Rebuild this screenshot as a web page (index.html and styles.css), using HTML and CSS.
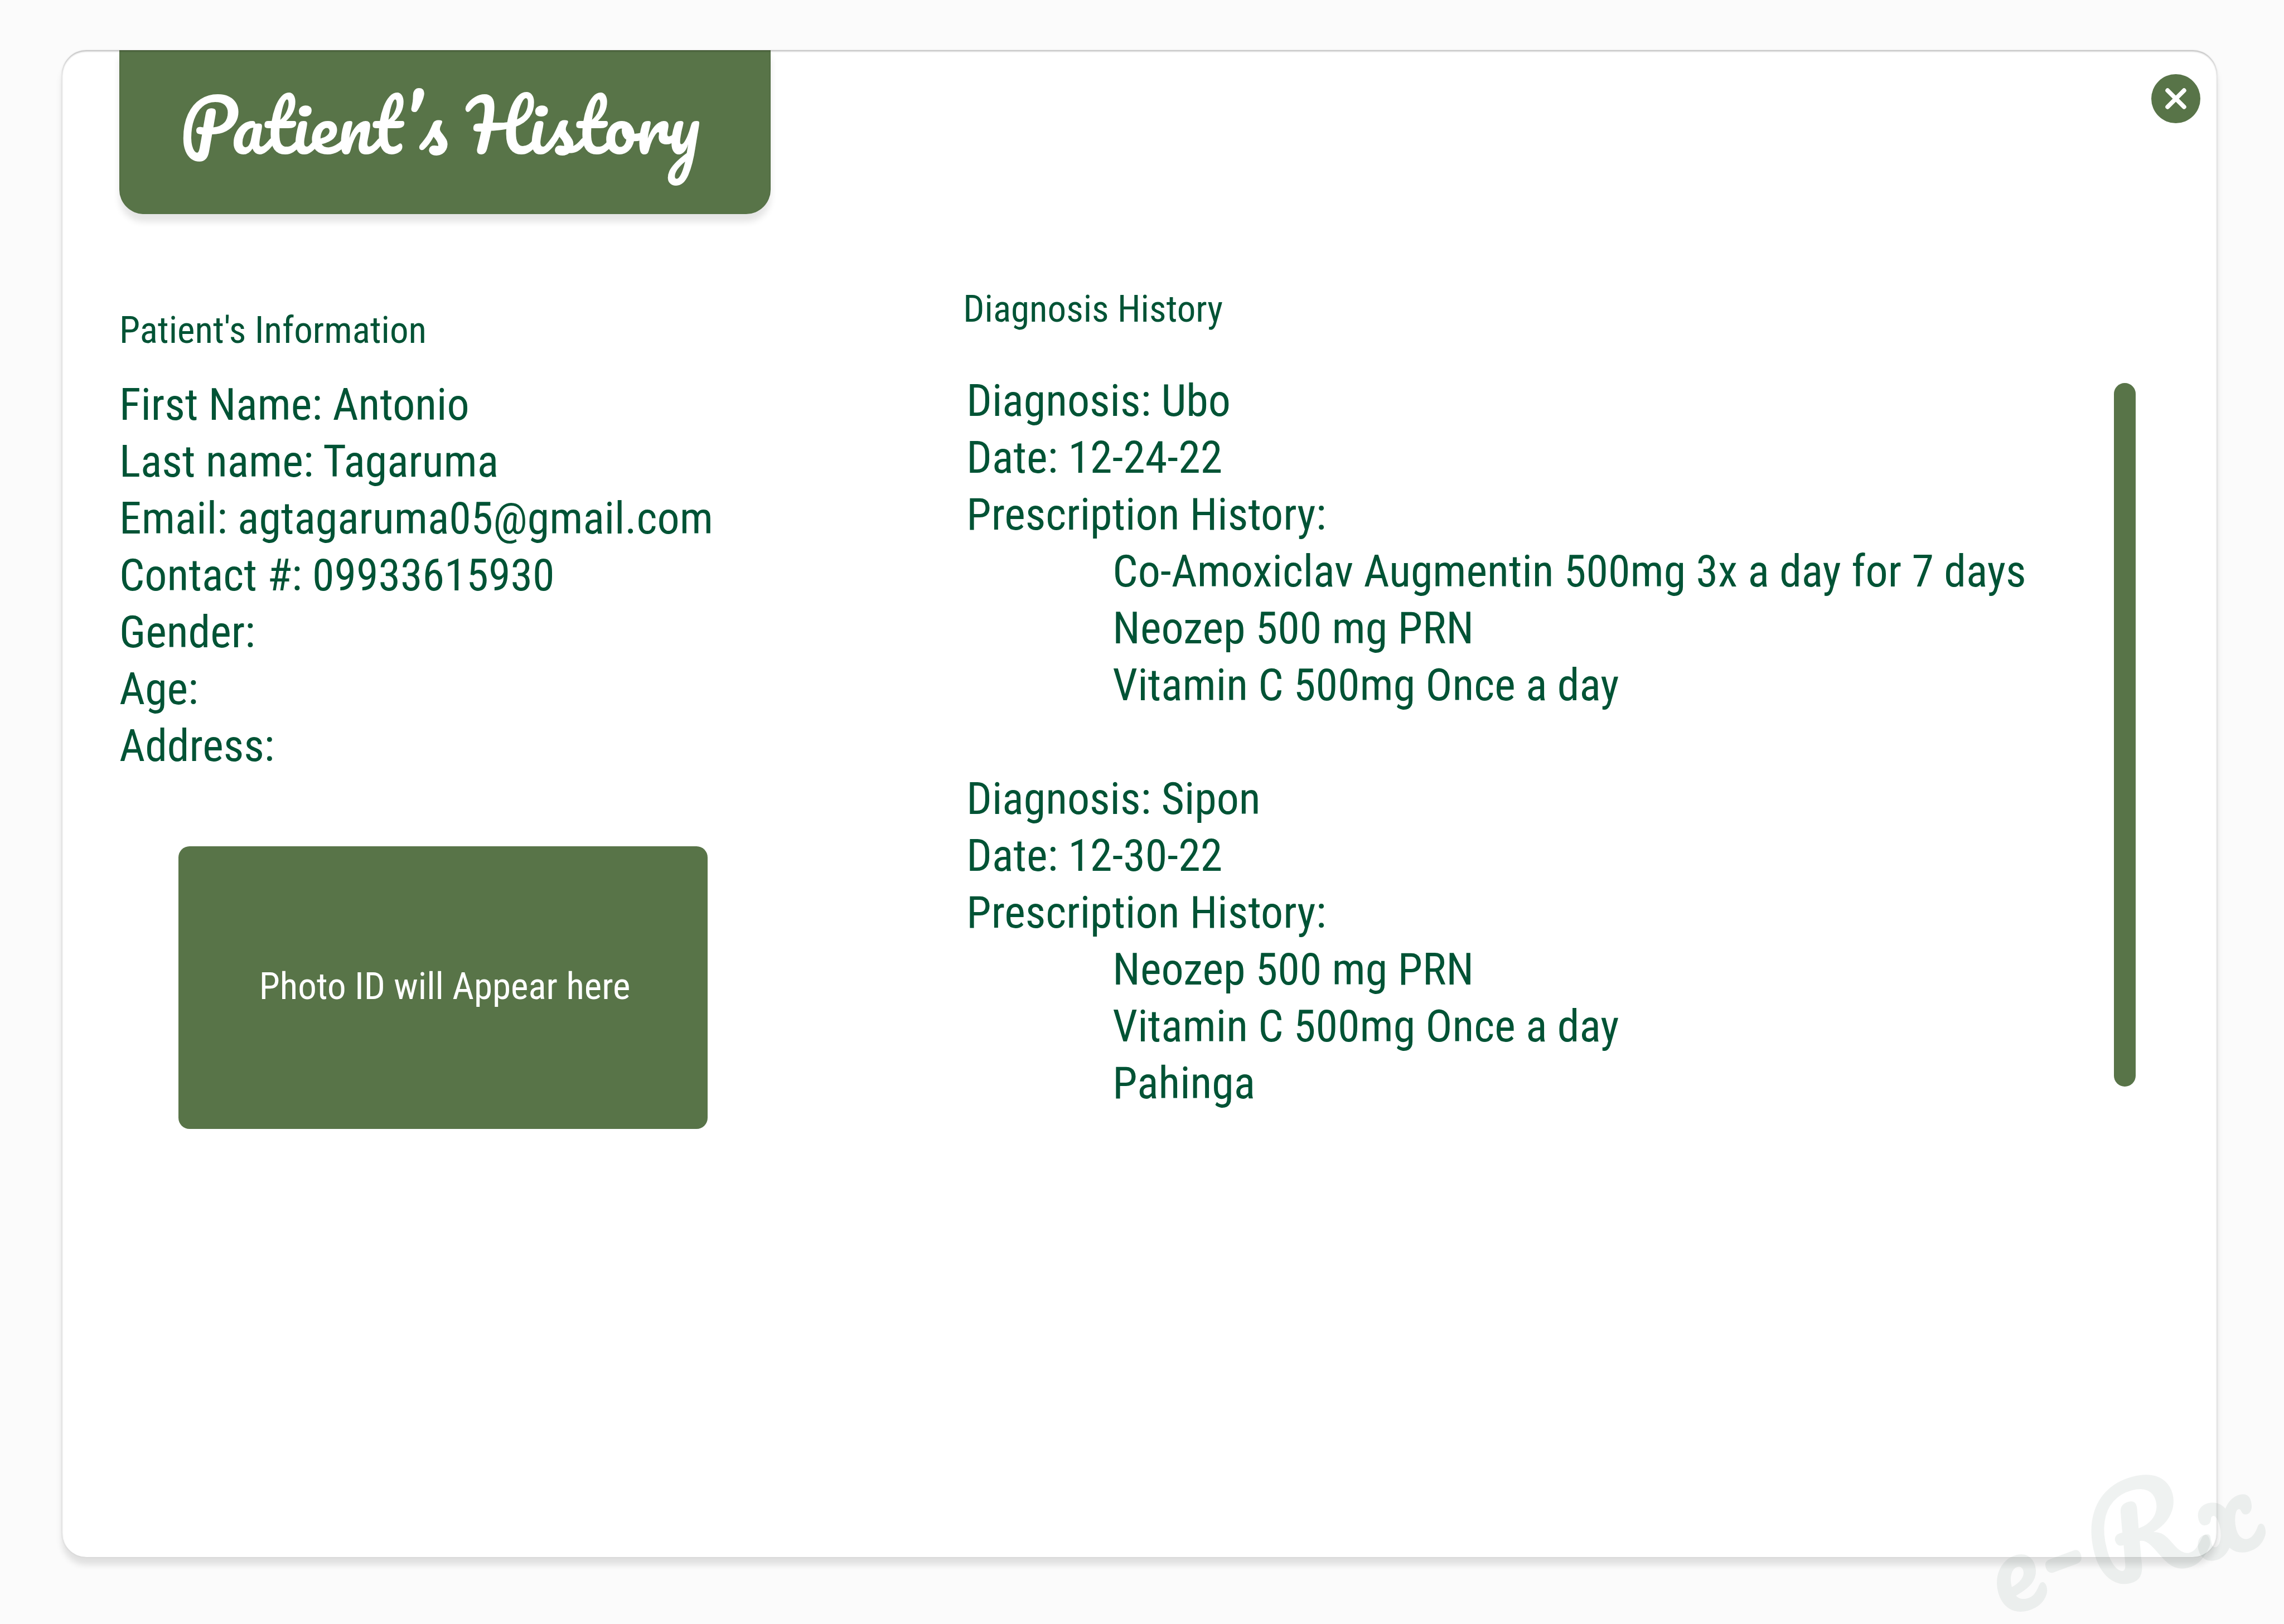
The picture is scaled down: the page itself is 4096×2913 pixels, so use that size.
FILE: index.html
```html
<!DOCTYPE html>
<html lang="en">
<head>
<meta charset="utf-8">
<meta name="viewport" content="width=device-width, initial-scale=1">
<title>Patient's History</title>
<link rel="stylesheet" href="styles.css">
</head>
<body class="page">
<main class="card">
  <header class="card-header">
    <h1 class="tab">Patient’s History</h1>
    <button class="close" type="button" aria-label="Close">
      <svg class="close-icon" viewBox="0 0 128 128" aria-hidden="true">
        <path d="M42.500 42.500L85.500 85.500M85.500 42.500L42.500 85.500" fill="none" stroke="#fff" stroke-width="11.500" stroke-linecap="round"/>
      </svg>
    </button>
  </header>
  <div class="columns">
    <section class="patient">
      <h2 class="heading">Patient's Information</h2>
      <ul class="lines">
        <li>First Name: Antonio</li>
        <li>Last name: Tagaruma</li>
        <li>Email: agtagaruma05@gmail.com</li>
        <li>Contact #: 09933615930</li>
        <li>Gender:</li>
        <li>Age:</li>
        <li>Address:</li>
      </ul>
      <div class="photo">Photo ID will Appear here</div>
    </section>
    <section class="history">
      <h2 class="heading">Diagnosis History</h2>
      <div class="records">
        <ul class="lines">
          <li>Diagnosis: Ubo</li>
          <li>Date: 12-24-22</li>
          <li>Prescription History:
            <ul class="lines prescriptions">
              <li>Co-Amoxiclav Augmentin 500mg 3x a day for 7 days</li>
              <li>Neozep 500 mg PRN</li>
              <li>Vitamin C 500mg Once a day</li>
            </ul>
          </li>
        </ul>
        <ul class="lines">
          <li>Diagnosis: Sipon</li>
          <li>Date: 12-30-22</li>
          <li>Prescription History:
            <ul class="lines prescriptions">
              <li>Neozep 500 mg PRN</li>
              <li>Vitamin C 500mg Once a day</li>
              <li>Pahinga</li>
            </ul>
          </li>
        </ul>
      </div>
    </section>
    <div class="scroll-thumb"></div>
  </div>
</main>
<div class="watermark">e-Rx</div>
</body>
</html>
```
FILE: styles.css
```css
* { box-sizing: border-box; }

.page {
  position: relative;
  display: flex;
  min-height: 100vh;
  margin: 0;
  padding: 90px 120px 120px 111px;
  background: #fbfbfb;
  color: #005335;
  font-family: "Roboto Condensed", Roboto, sans-serif;
  font-size: 80px;
  line-height: 102px;
}

.card {
  flex: 1;
  border-radius: 44px;
  background: #fff;
  box-shadow: 0 14px 12px rgba(0, 0, 0, .11), inset 0 2px 3px rgba(0, 0, 0, .28), 0 0 3px rgba(0, 0, 0, .12);
}

.card-header {
  display: flex;
  justify-content: space-between;
  align-items: flex-start;
  padding: 0 30px 0 103px;
}

.tab {
  margin: 0;
  padding: 21px 127px 49px 109px;
  border-radius: 0 0 44px 44px;
  background: #587448;
  box-shadow: 0 14px 12px rgba(0, 0, 0, .1), inset 0 2px 3px rgba(0, 0, 0, .25);
  color: #fff;
  font: 400 127px/224px Pacifico, cursive;
}

.close {
  width: 88px;
  height: 88px;
  margin-top: 43px;
  padding: 0;
  border: 0;
  border-radius: 50%;
  background: #587448;
}

.close-icon {
  display: block;
  width: 100%;
}

.columns {
  display: grid;
  grid-template-columns: 11fr 15fr 39px;
  padding: 129px 146px 0 103px;
}

.patient { padding-top: 38px; }

.heading {
  margin: 0;
  font-size: 67px;
  font-weight: 400;
  line-height: 82px;
}

.lines {
  margin: 0;
  padding: 0;
  list-style: none;
}

.patient .lines { margin-top: 42px; }

.photo {
  display: flex;
  justify-content: center;
  align-items: center;
  width: 949px;
  height: 507px;
  margin: 129px 0 0 106px;
  padding: 0 0 6px 6px;
  border-radius: 20px;
  background: #587448;
  color: #fff;
  font-size: 67px;
}

.records {
  display: grid;
  gap: 102px;
  margin-top: 73px;
  padding-left: 6px;
}

.prescriptions { padding-left: 262px; }

.scroll-thumb {
  height: 1262px;
  margin-top: 174px;
  border-radius: 20px;
  background: #587448;
}

.watermark {
  position: absolute;
  right: 44px;
  bottom: 44px;
  color: rgba(0, 49, 33, .063);
  font: 400 216px/240px Pacifico, cursive;
  transform: rotate(-15deg);
}
```
